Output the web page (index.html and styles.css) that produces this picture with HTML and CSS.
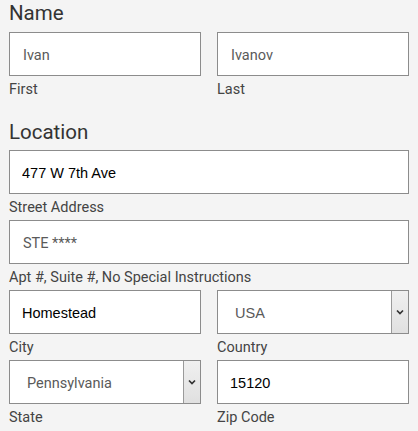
FILE: index.html
```html
<!DOCTYPE html>
<html>
<head>
<meta charset="utf-8">
<link rel="stylesheet" href="styles.css">
</head>
<body>
<form class="form">
  <h2 class="heading heading-first">Name</h2>
  <div class="row">
    <div class="field">
      <input class="input input-soft" type="text" value="Ivan">
      <label class="label">First</label>
    </div>
    <div class="field">
      <input class="input input-soft" type="text" value="Ivanov">
      <label class="label">Last</label>
    </div>
  </div>

  <h2 class="heading">Location</h2>
  <div class="field">
    <input class="input input-strong" type="text" value="477 W 7th Ave">
    <label class="label">Street Address</label>
  </div>
  <div class="field">
    <input class="input input-soft" type="text" value="STE ****">
    <label class="label">Apt #, Suite #, No Special Instructions</label>
  </div>
  <div class="row">
    <div class="field">
      <input class="input input-strong" type="text" value="Homestead">
      <label class="label">City</label>
    </div>
    <div class="field">
      <div class="select">
        <select class="select-control select-arial"><option>USA</option></select>
        <span class="select-arrow"><svg width="8" height="6" viewBox="0 0 8 6"><path d="M1 1.5 L4 4.5 L7 1.5" fill="none" stroke="#333" stroke-width="1.7"/></svg></span>
      </div>
      <label class="label">Country</label>
    </div>
  </div>
  <div class="row">
    <div class="field">
      <div class="select">
        <select class="select-control select-roboto"><option>Pennsylvania</option></select>
        <span class="select-arrow"><svg width="8" height="6" viewBox="0 0 8 6"><path d="M1 1.5 L4 4.5 L7 1.5" fill="none" stroke="#333" stroke-width="1.7"/></svg></span>
      </div>
      <label class="label">State</label>
    </div>
    <div class="field">
      <input class="input input-strong" type="text" value="15120">
      <label class="label">Zip Code</label>
    </div>
  </div>
</form>
</body>
</html>
```

FILE: styles.css
```css
html, body {
  margin: 0;
  padding: 0;
  background: #f4f4f4;
}

.form {
  width: 400px;
  padding-left: 9px;
  font-family: Roboto, "Noto Sans", sans-serif;
}

.heading {
  margin: 17px 0 5px;
  font-family: Roboto, sans-serif;
  font-weight: 400;
  font-size: 20.5px;
  line-height: 26px;
  color: #333;
}

.heading-first {
  margin-top: 0;
  margin-bottom: 6px;
}

.row {
  display: grid;
  grid-template-columns: 1fr 1fr;
  column-gap: 16px;
}

.field {
  display: flex;
  flex-direction: column;
}

.input {
  box-sizing: border-box;
  width: 100%;
  height: 44px;
  margin: 0;
  padding: 2px 12px 0 13px;
  border: 1px solid #8c8c8c;
  border-radius: 0;
  background: #fff;
  outline: none;
}

.input-soft {
  font-family: Roboto, sans-serif;
  font-size: 14.5px;
  color: #5a5a5a;
  padding-left: 13px;
}

.input-strong {
  font-family: "Liberation Sans", Arial, sans-serif;
  font-size: 14.5px;
  color: #000;
  padding-left: 12px;
}

.label {
  margin: 4px 0 2px;
  font-size: 14.5px;
  line-height: 20px;
  color: #444;
}

.select {
  box-sizing: border-box;
  height: 44px;
  display: flex;
  border: 1px solid #8c8c8c;
  background: #fff;
}

.select-control {
  flex: 1;
  min-width: 0;
  margin: 0;
  padding-top: 2px;
  border: 0;
  background: transparent;
  appearance: none;
  -webkit-appearance: none;
  outline: none;
  font-size: 14.5px;
  color: #5a5a5a;
}

.select-arial {
  font-family: "Liberation Sans", Arial, sans-serif;
  padding-left: 17px;
}

.select-roboto {
  font-family: Roboto, sans-serif;
  padding-left: 17px;
}

.select-arrow {
  width: 16px;
  display: flex;
  align-items: center;
  justify-content: center;
  border-left: 1px solid #9a9a9a;
  background: linear-gradient(#f0f0f0, #e0e0e0);
}
```
